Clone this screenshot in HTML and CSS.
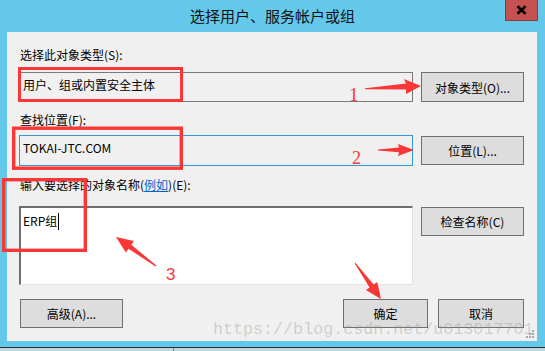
FILE: index.html
```html
<!DOCTYPE html>
<html lang="zh-CN">
<head>
    <meta charset="UTF-8">
    <title>选择用户、服务帐户或组</title>
    <link rel="stylesheet" href="styles.css">
</head>
<body>
    <div class="window">
        <div class="titlebar">
            <span class="title">选择用户、服务帐户或组</span>
            <button class="close">
                <svg width="11" height="10" viewBox="0 0 11 10"><path d="M1.5 1.2 L9.5 8.8 M9.5 1.2 L1.5 8.8" stroke="#000" stroke-width="2.6"/></svg>
            </button>
        </div>
        <div class="client">
            <div class="label">选择此对象类型(S):</div>
            <div class="row row-type">
                <div class="field readonly">用户、组或内置安全主体</div>
                <button class="btn tall">对象类型(O)...</button>
            </div>
            <div class="label">查找位置(F):</div>
            <div class="row row-location">
                <div class="field focused">TOKAI-JTC.COM</div>
                <button class="btn">位置(L)...</button>
            </div>
            <div class="label">输入要选择的对象名称(<a class="link" href="#">例如</a>)(E):</div>
            <div class="row row-names">
                <div class="field names">ERP组<span class="caret"></span></div>
                <button class="btn">检查名称(C)</button>
            </div>
            <div class="actions">
                <button class="btn advanced">高级(A)...</button>
                <button class="btn ok">确定</button>
                <button class="btn cancel">取消</button>
            </div>
        </div>
        <div class="frame-bottom"></div>
    </div>
    <div class="taskbar"><span class="task-divider"></span></div>

    <!-- screenshot annotations drawn on top -->
    <svg class="marks" width="545" height="351" viewBox="0 0 545 351">
        <g fill="none" stroke="#fa3636">
            <rect x="19.5" y="68.5" width="162" height="32" stroke-width="3"/>
            <rect x="13.7" y="128.2" width="167.6" height="40" stroke-width="3.4"/>
            <rect x="3.7" y="179.7" width="81.6" height="70.6" stroke-width="3.4"/>
        </g>
        <g fill="#fa3636">
            <polygon points="365,88.3 406,83.6 404,79 421,86 406,94 406,89.6 365,89.3"/>
            <polygon points="378,149.6 399,147.6 398,144 414,150 398,156 399,152.2 378,150.5"/>
            <polygon points="116,237 133.9,241.1 131.3,244.8 156.4,265.6 155.6,266.4 128.5,248.8 125.9,252.5"/>
            <polygon points="381,299 365.9,290.1 369.6,287.5 354.6,263.3 355.4,262.7 373.6,284.5 377.3,281.9"/>
            <text class="num serif" x="349" y="101">1</text>
            <text class="num serif small" x="352" y="164">2</text>
            <text class="num sans" x="166" y="280">3</text>
        </g>
        <g fill="#a8a8a8">
            <rect x="532" y="330" width="2" height="2"/>
            <rect x="529" y="333" width="2" height="2"/>
            <rect x="532" y="333" width="2" height="2"/>
            <rect x="526" y="336" width="2" height="2"/>
            <rect x="529" y="336" width="2" height="2"/>
            <rect x="532" y="336" width="2" height="2"/>
        </g>
    </svg>
    <div class="watermark">https://blog.csdn.net/u013017701</div>
</body>
</html>
```

FILE: styles.css
```css
body {
    margin: 0;
    width: 545px;
    height: 351px;
    overflow: hidden;
    position: relative;
    background-color: #63c8ea;
    font-family: "Noto Sans CJK SC", "Liberation Sans", sans-serif;
    font-size: 12px;
    color: #000;
}
.window {
    display: flex;
    flex-direction: column;
}
.titlebar {
    height: 32px;
    display: grid;
    grid-template-columns: 1fr auto 1fr;
}
.title {
    grid-column: 2;
    align-self: center;
    font-size: 15px;
    line-height: 20px;
    color: #111;
}
.close {
    grid-column: 3;
    justify-self: end;
    align-self: start;
    margin-right: 7px;
    width: 33px;
    height: 21px;
    padding: 0;
    border: 1px solid #8e3b3b;
    border-top: none;
    background-color: #c75050;
    display: flex;
    align-items: center;
    justify-content: center;
}
.client {
    box-sizing: border-box;
    height: 309px;
    margin: 0 8px 0 7px;
    padding: 15px 13px 13px 12px;
    background-color: #f0f0f0;
}
.label {
    height: 16px;
    line-height: 16px;
    padding-left: 1px;
    white-space: nowrap;
}
.link {
    color: #0066cc;
    text-decoration: underline;
}
.row {
    display: grid;
    grid-template-columns: 1fr 103px;
    column-gap: 8px;
    align-items: start;
}
.row-type {
    margin: 9px 0 10px;
}
.row-location {
    margin: 7px 0 11px;
}
.row-names {
    margin: 13px 0 14px;
}
.field {
    box-sizing: border-box;
    line-height: 16px;
    padding: 4px 3px;
    white-space: nowrap;
}
.readonly {
    height: 30px;
    border: 1px solid #7a7a7a;
    background-color: #f0f0f0;
}
.focused {
    height: 31px;
    border: 1px solid #3399dd;
    background-color: #f0f0f0;
}
.names {
    height: 79px;
    padding: 5px 2px;
    background-color: #fff;
    border-style: solid;
    border-width: 2px 1px 1px 2px;
    border-color: #6e6e6e #e3e3e3 #e3e3e3 #6e6e6e;
}
.caret {
    display: inline-block;
    width: 1px;
    height: 17px;
    margin-left: 1px;
    vertical-align: -4px;
    background-color: #000;
}
.btn {
    box-sizing: border-box;
    height: 29px;
    padding: 0;
    border: 1px solid #707070;
    background-color: #dddddd;
    font-family: inherit;
    font-size: 12px;
    color: #000;
}
.row .btn {
    margin-top: 1px;
}
.row .btn.tall {
    height: 30px;
    margin-top: 0;
}
.actions {
    display: flex;
}
.advanced {
    width: 103px;
    margin-left: 1px;
}
.ok {
    width: 85px;
    margin-left: auto;
}
.cancel {
    width: 86px;
    margin-left: 10px;
}
.frame-bottom {
    height: 6px;
}
.taskbar {
    height: 4px;
    border-top: 1px solid #2b2b2b;
    background-color: #c6d3e0;
    display: flex;
}
.task-divider {
    width: 1px;
    margin-left: 173px;
    background-color: #7d8791;
}
.marks {
    position: absolute;
    left: 0;
    top: 0;
    pointer-events: none;
}
.num {
    font-size: 19px;
}
.serif {
    font-family: "Liberation Serif", serif;
}
.small {
    font-size: 18px;
}
.sans {
    font-family: "Liberation Sans", sans-serif;
    font-size: 17px;
}
.watermark {
    position: absolute;
    left: 213px;
    top: 323px;
    font-family: "Liberation Mono", monospace;
    font-size: 16.7px;
    line-height: 14px;
    color: rgba(150, 150, 150, 0.38);
    white-space: nowrap;
    pointer-events: none;
}
```
